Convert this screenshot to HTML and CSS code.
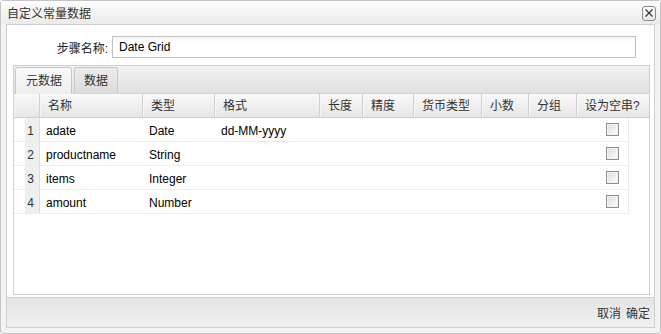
FILE: index.html
```html
<!DOCTYPE html>
<html lang="zh-CN">
<head>
    <meta charset="UTF-8">
    <title>自定义常量数据</title>
    <link rel="stylesheet" href="styles.css">
</head>
<body>
    <div class="window">
        <div class="titlebar">
            <span class="title">自定义常量数据</span>
            <span class="close-btn">
                <svg width="8" height="8" viewBox="0 0 8 8"><path d="M0.5 0.5L7.5 7.5M7.5 0.5L0.5 7.5" stroke="#333" stroke-width="1.2" fill="none"/></svg>
            </span>
        </div>

        <div class="frame">
            <div class="content">
                <div class="form-row">
                    <label class="form-label">步骤名称:</label>
                    <div class="text-input">Date Grid</div>
                </div>

                <div class="tab-panel">
                    <div class="tab-strip">
                        <div class="tab active">元数据</div>
                        <div class="tab">数据</div>
                    </div>

                    <div class="grid">
                        <div class="grid-header">
                            <div class="hcell c-num"></div>
                            <div class="hcell c-name">名称</div>
                            <div class="hcell c-type">类型</div>
                            <div class="hcell c-fmt">格式</div>
                            <div class="hcell c-len">长度</div>
                            <div class="hcell c-prec">精度</div>
                            <div class="hcell c-cur">货币类型</div>
                            <div class="hcell c-dec">小数</div>
                            <div class="hcell c-grp">分组</div>
                            <div class="hcell c-null">设为空串?</div>
                        </div>

                        <div class="grid-row">
                            <div class="cell c-num rownum">1</div>
                            <div class="cell c-name">adate</div>
                            <div class="cell c-type">Date</div>
                            <div class="cell c-fmt">dd-MM-yyyy</div>
                            <div class="cell c-len"></div>
                            <div class="cell c-prec"></div>
                            <div class="cell c-cur"></div>
                            <div class="cell c-dec"></div>
                            <div class="cell c-grp"></div>
                            <div class="cell c-null-body"><span class="checkbox"></span></div>
                        </div>
                        <div class="grid-row">
                            <div class="cell c-num rownum">2</div>
                            <div class="cell c-name">productname</div>
                            <div class="cell c-type">String</div>
                            <div class="cell c-fmt"></div>
                            <div class="cell c-len"></div>
                            <div class="cell c-prec"></div>
                            <div class="cell c-cur"></div>
                            <div class="cell c-dec"></div>
                            <div class="cell c-grp"></div>
                            <div class="cell c-null-body"><span class="checkbox"></span></div>
                        </div>
                        <div class="grid-row">
                            <div class="cell c-num rownum">3</div>
                            <div class="cell c-name">items</div>
                            <div class="cell c-type">Integer</div>
                            <div class="cell c-fmt"></div>
                            <div class="cell c-len"></div>
                            <div class="cell c-prec"></div>
                            <div class="cell c-cur"></div>
                            <div class="cell c-dec"></div>
                            <div class="cell c-grp"></div>
                            <div class="cell c-null-body"><span class="checkbox"></span></div>
                        </div>
                        <div class="grid-row">
                            <div class="cell c-num rownum">4</div>
                            <div class="cell c-name">amount</div>
                            <div class="cell c-type">Number</div>
                            <div class="cell c-fmt"></div>
                            <div class="cell c-len"></div>
                            <div class="cell c-prec"></div>
                            <div class="cell c-cur"></div>
                            <div class="cell c-dec"></div>
                            <div class="cell c-grp"></div>
                            <div class="cell c-null-body"><span class="checkbox"></span></div>
                        </div>
                    </div>
                </div>
            </div>

            <div class="footer">
                <span class="footer-btn">取消</span>
                <span class="footer-btn">确定</span>
            </div>
        </div>
    </div>
</body>
</html>
```

FILE: styles.css
```css
* {
    margin: 0;
    padding: 0;
    box-sizing: border-box;
}

body {
    font-family: "Liberation Sans", "Noto Sans CJK SC", sans-serif;
    font-size: 12px;
    color: #000;
    background: #fff;
}

.window {
    width: 661px;
    height: 334px;
    border: 1px solid #c4c4c4;
    border-radius: 3px;
    background: #f3f3f3;
    display: flex;
    flex-direction: column;
}

.titlebar {
    height: 23px;
    flex-shrink: 0;
    display: flex;
    align-items: center;
    justify-content: space-between;
    padding: 0 4px 0 6px;
    background: linear-gradient(#fdfdfd, #ebebeb);
}

.title {
    font-size: 12px;
    color: #333;
}

.close-btn {
    width: 14px;
    height: 15px;
    border: 1px solid #8a8a8a;
    border-radius: 3px;
    background: linear-gradient(#ffffff, #e6e6e6);
    display: flex;
    align-items: center;
    justify-content: center;
    margin-top: 1px;
}

.frame {
    flex: 1;
    margin: 0 5px 5px 5px;
    border: 1px solid #cfcfcf;
    background: #fff;
    display: flex;
    flex-direction: column;
}

.content {
    flex: 1;
    display: flex;
    flex-direction: column;
    padding: 11px 4px 2px 6px;
}

.form-row {
    display: flex;
    align-items: center;
    height: 22px;
}

.form-label {
    width: 95px;
    text-align: right;
    color: #222;
    margin-right: 4px;
}

.text-input {
    width: 524px;
    height: 22px;
    border: 1px solid #c2c2c2;
    background: linear-gradient(#f4f4f4, #ffffff 5px);
    padding: 0 6px;
    line-height: 20px;
    color: #000;
}

.tab-panel {
    flex: 1;
    margin-top: 7px;
    border: 1px solid #d0d0d0;
    display: flex;
    flex-direction: column;
}

.tab-strip {
    height: 28px;
    display: flex;
    align-items: flex-end;
    gap: 2px;
    padding-left: 1px;
    background: linear-gradient(#f2f2f2, #e1e1e1);
    border-bottom: 1px solid #d4d4d4;
}

.tab {
    height: 26px;
    padding: 0 9px;
    border: 1px solid #c8c8c8;
    border-bottom: none;
    border-radius: 3px 3px 0 0;
    background: linear-gradient(#ececec, #dcdcdc);
    line-height: 27px;
    color: #333;
    white-space: nowrap;
}

.tab.active {
    padding: 0 9px 0 10px;
    background: linear-gradient(#fafafa, #eeeeee);
    height: 27px;
    margin-bottom: -1px;
}

.grid {
    flex: 1;
    display: flex;
    flex-direction: column;
}

.grid-header {
    display: flex;
    height: 24px;
    border-bottom: 1px solid #cfcfcf;
}

.hcell {
    height: 100%;
    padding-left: 7px;
    line-height: 25px;
    color: #333;
    background: linear-gradient(#fafafa, #e6e6e6);
    border-right: 1px solid #d2d2d2;
    border-left: 1px solid #f7f7f7;
    white-space: nowrap;
}

.hcell:last-child {
    border-right: none;
}

.grid-row {
    display: flex;
    width: 615px;
    height: 24px;
    border-bottom: 1px solid #ededed;
    border-right: 1px solid #ededed;
}

.cell {
    height: 100%;
    padding-left: 6px;
    line-height: 26px;
    white-space: nowrap;
    overflow: hidden;
}

.c-num { width: 26px; }
.c-name { width: 103px; }
.c-type { width: 72px; }
.c-fmt { width: 105px; }
.c-len { width: 43px; }
.c-prec { width: 51px; }
.c-cur { width: 68px; }
.c-dec { width: 47px; }
.c-grp { width: 48px; }
.c-null { width: 72px; }
.c-null-body { width: 51px; }

.hcell.c-num {
    padding: 0;
}

.rownum {
    padding: 0 5px 0 0;
    text-align: right;
    color: #333;
    background: linear-gradient(to right, #ffffff 45%, #efefef 45%);
    border-right: 1px solid #dcdcdc;
}

.c-null-body {
    display: flex;
    align-items: center;
    padding-left: 29px;
}

.checkbox {
    width: 13px;
    height: 13px;
    border: 1px solid #8e8e8e;
    background: linear-gradient(135deg, #dcdcdc, #ffffff);
    box-shadow: inset 0 0 0 1px #f4f4f4;
}

.footer {
    height: 30px;
    flex-shrink: 0;
    border-top: 1px solid #d0d0d0;
    background: linear-gradient(#e4e4e4, #f0f0f0);
    display: flex;
    align-items: center;
    justify-content: flex-end;
    gap: 5px;
    padding-right: 4px;
}

.footer-btn {
    color: #333;
}
```
